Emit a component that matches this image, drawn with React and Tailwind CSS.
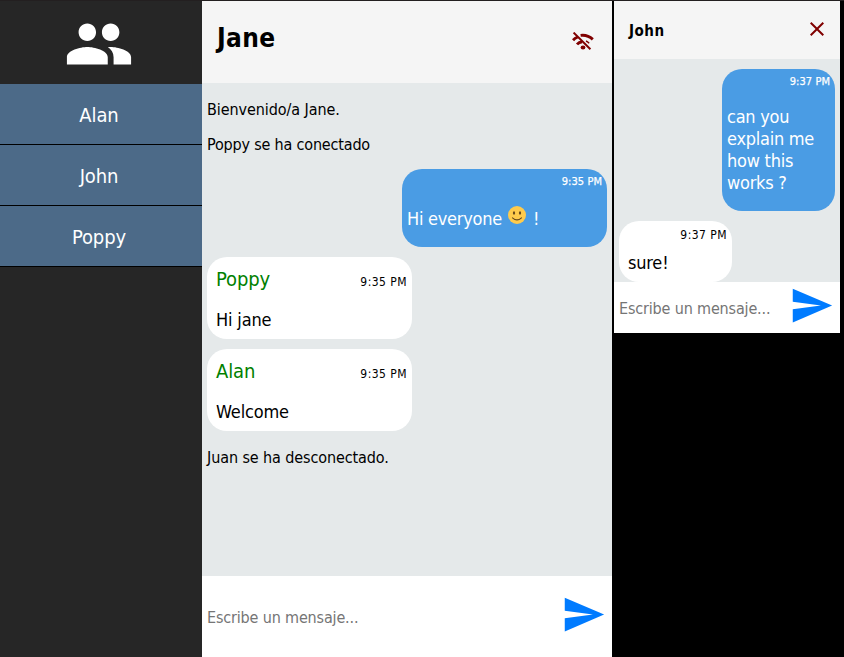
import React from "react";
import { MdPeople, MdSend, MdClose } from "react-icons/md";

function WifiOff() {
  return (
    <svg className="h-[18px] w-[22px]" viewBox="0 0 22 18" fill="none" stroke="#800000">
      <path d="M1.6 0.6 L18.4 17.2" strokeWidth="2" />
      <path d="M8.6 3.4 C13 2.8 17.4 4.2 20.8 7.4" strokeWidth="2.9" />
      <path d="M1 8.2 C2.2 6.8 3.8 5.8 5.8 5" strokeWidth="2.9" />
      <path d="M5 12.4 C6.4 10.8 8 10 10.2 9.8" strokeWidth="2.9" />
      <path d="M14 9 C15.2 9.5 16.2 10.3 17.2 11.3" strokeWidth="1.4" />
      <ellipse cx="11" cy="15.4" rx="2.4" ry="2" fill="#800000" stroke="none" />
    </svg>
  );
}

function Smiley() {
  return (
    <svg className="ml-[6px] mr-[7px] mt-[-2px] h-[18px] w-[18px]" viewBox="0 0 18 18">
      <circle cx="9" cy="9" r="9" fill="#ffcb4c" />
      <ellipse cx="6" cy="7" rx="1.1" ry="1.8" fill="#65471b" />
      <ellipse cx="12" cy="7" rx="1.1" ry="1.8" fill="#65471b" />
      <path d="M4.5 11.8 Q9 16 13.5 11.8" fill="none" stroke="#65471b" strokeWidth="1.1" strokeLinecap="round" />
    </svg>
  );
}

function Received({ name, time, text }) {
  return (
    <div className="mb-[10px] h-[82px] w-[205px] rounded-[20px] bg-white pl-[9px] pr-[5px] pt-[10px]">
      <div className="flex justify-between">
        <span className="text-[20px] leading-[24px] tracking-[-0.1px] text-[#008000]">{name}</span>
        <span className="pt-[5px] text-[12px] leading-[20px] tracking-[0.45px]">{time}</span>
      </div>
      <p className="mt-[17px] text-[18px] leading-[22px] tracking-[-0.15px]">{text}</p>
    </div>
  );
}

export default function App() {
  return (
    <div className="flex h-[657px] w-[844px] overflow-hidden border-t border-[#231f20] bg-black font-['DejaVu_Sans_Condensed','DejaVu_Sans',sans-serif] text-black">
      <aside className="w-[202px] shrink-0 bg-[#262626]">
        <div className="flex h-[83px] justify-center pr-[4px] pt-[8px]">
          <MdPeople className="h-[70px] w-[70px] text-white" />
        </div>
        {["Alan", "John", "Poppy"].map((n) => (
          <div key={n} className="flex h-[61px] items-center justify-center border-b border-black bg-[#4c6a88] pr-[4px] pt-[2px] text-[20px] tracking-[-0.1px] text-white">
            {n}
          </div>
        ))}
      </aside>

      <main className="flex w-[410px] shrink-0 flex-col bg-[#e5e9ea]">
        <header className="flex h-[82px] shrink-0 justify-between bg-[#f5f5f5] pl-[15px] pr-[18px]">
          <h1 className="pt-[21px] text-[26px] font-bold leading-[32px] tracking-[0.4px]">Jane</h1>
          <div className="pt-[31px]"><WifiOff /></div>
        </header>
        <section className="flex-1 px-[5px] pt-[17px]">
          <p className="text-[16px] leading-[20px] tracking-[-0.08px]">Bienvenido/a Jane.</p>
          <p className="mt-[15px] text-[16px] leading-[20px] tracking-[-0.18px]">Poppy se ha conectado</p>
          <div className="mb-[10px] ml-auto mt-[14px] h-[78px] w-[205px] rounded-[20px] bg-[#4a9ce4] px-[5px] pt-[6px] text-white">
            <div className="text-right text-[11px] leading-[14px] tracking-[0.05px] [-webkit-text-stroke:0.25px_white]">9:35 PM</div>
            <div className="mt-[19px] flex text-[18px] leading-[22px] tracking-[-0.25px]">
              <span>Hi everyone</span>
              <Smiley />
              <span>!</span>
            </div>
          </div>
          <Received name="Poppy" time="9:35 PM" text="Hi jane" />
          <Received name="Alan" time="9:35 PM" text="Welcome" />
          <p className="mt-[17px] text-[16px] leading-[20px] tracking-[-0.1px]">Juan se ha desconectado.</p>
        </section>
        <footer className="flex h-[81px] shrink-0 items-center justify-between bg-white pl-[5px] pr-[6px]">
          <span className="pt-[2px] text-[16px] tracking-[-0.16px] text-[#757575]">Escribe un mensaje...</span>
          <MdSend className="mb-[4px] h-[45px] w-[45px] text-[#007bff]" />
        </footer>
      </main>

      <div className="ml-[2px] flex h-[332px] w-[226px] shrink-0 flex-col bg-[#e5e9ea]">
        <header className="flex h-[58px] shrink-0 justify-between bg-[#f5f5f5] pl-[15px] pr-[11px]">
          <h2 className="pt-[20px] text-[15px] font-bold leading-[20px] tracking-[0.5px]">John</h2>
          <MdClose className="mt-[16px] h-[24px] w-[24px] text-[#800000]" />
        </header>
        <section className="flex-1 px-[5px] pt-[10px]">
          <div className="ml-auto h-[142px] w-[113px] rounded-[20px] bg-[#4a9ce4] px-[5px] pt-[6px] text-white">
            <div className="text-right text-[11px] leading-[14px] tracking-[0.05px] [-webkit-text-stroke:0.25px_white]">9:37 PM</div>
            <p className="mt-[17px] text-[18px] leading-[22px] tracking-[-0.25px]">can you<br />explain me<br />how this<br />works ?</p>
          </div>
          <div className="mt-[10px] h-[61px] w-[113px] rounded-[20px] bg-white pl-[9px] pr-[5px] pt-[4px]">
            <div className="text-right text-[12px] leading-[20px] tracking-[0.45px]">9:37 PM</div>
            <p className="mt-[7px] text-[18px] leading-[22px] tracking-[-0.2px]">sure!</p>
          </div>
        </section>
        <footer className="flex h-[51px] shrink-0 items-center justify-between bg-white pl-[5px] pr-[6px]">
          <span className="pt-[2px] text-[16px] tracking-[-0.16px] text-[#757575]">Escribe un mensaje...</span>
          <MdSend className="mb-[4px] h-[45px] w-[45px] text-[#007bff]" />
        </footer>
      </div>
    </div>
  );
}
